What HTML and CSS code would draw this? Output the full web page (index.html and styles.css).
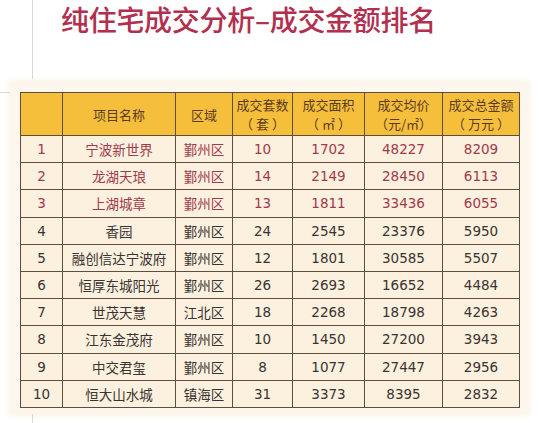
FILE: index.html
```html
<!DOCTYPE html>
<html lang="zh-CN">
<head>
    <meta charset="UTF-8">
    <meta name="viewport" content="width=device-width, initial-scale=1.0">
    <title>纯住宅成交分析-成交金额排名</title>
    <link rel="stylesheet" href="styles.css">
</head>
<body>
    <div class="slide">
        <h1 class="title">纯住宅成交分析–成交金额排名</h1>

        <div class="panel">
            <table class="rank">
                <colgroup>
                    <col style="width: 42px">
                    <col style="width: 113px">
                    <col style="width: 57px">
                    <col style="width: 60px">
                    <col style="width: 72px">
                    <col style="width: 78px">
                    <col style="width: 77px">
                </colgroup>
                <thead>
                    <tr>
                        <th></th>
                        <th>项目名称</th>
                        <th>区域</th>
                        <th>成交套数<br>（ 套 ）</th>
                        <th>成交面积<br>（ ㎡ ）</th>
                        <th>成交均价<br>（元/㎡）</th>
                        <th>成交总金额<br>（ 万元 ）</th>
                    </tr>
                </thead>
                <tbody>
                    <tr class="top"><td>1</td><td class="zh">宁波新世界</td><td class="zh">鄞州区</td><td>10</td><td>1702</td><td>48227</td><td>8209</td></tr>
                    <tr class="top"><td>2</td><td class="zh">龙湖天琅</td><td class="zh">鄞州区</td><td>14</td><td>2149</td><td>28450</td><td>6113</td></tr>
                    <tr class="top"><td>3</td><td class="zh">上湖城章</td><td class="zh">鄞州区</td><td>13</td><td>1811</td><td>33436</td><td>6055</td></tr>
                    <tr><td>4</td><td class="zh">香园</td><td class="zh">鄞州区</td><td>24</td><td>2545</td><td>23376</td><td>5950</td></tr>
                    <tr><td>5</td><td class="zh">融创信达宁波府</td><td class="zh">鄞州区</td><td>12</td><td>1801</td><td>30585</td><td>5507</td></tr>
                    <tr><td>6</td><td class="zh">恒厚东城阳光</td><td class="zh">鄞州区</td><td>26</td><td>2693</td><td>16652</td><td>4484</td></tr>
                    <tr><td>7</td><td class="zh">世茂天慧</td><td class="zh">江北区</td><td>18</td><td>2268</td><td>18798</td><td>4263</td></tr>
                    <tr><td>8</td><td class="zh">江东金茂府</td><td class="zh">鄞州区</td><td>10</td><td>1450</td><td>27200</td><td>3943</td></tr>
                    <tr><td>9</td><td class="zh">中交君玺</td><td class="zh">鄞州区</td><td>8</td><td>1077</td><td>27447</td><td>2956</td></tr>
                    <tr><td>10</td><td class="zh">恒大山水城</td><td class="zh">镇海区</td><td>31</td><td>3373</td><td>8395</td><td>2832</td></tr>
                </tbody>
            </table>
        </div>
        <div class="foot"></div>
    </div>
</body>
</html>
```

FILE: styles.css
```css
:root {
    --vinho: #b2304f;
    --amarelo: #f5bf3c;
    --creme: #fcf0df;
    --fundo: #fdf6ec;
    --linha: #5f4d3d;
    --texto: #3a3330;
    --destaque: #a03a4c;
}

body {
    margin: 0;
    background: #ffffff;
    font-family: "DejaVu Sans", "Noto Sans CJK SC", sans-serif;
    color: var(--texto);
}

.slide {
    position: relative;
    width: 539px;
    height: 423px;
    overflow: hidden;
}

/* linhas cinzas decorativas do slide */
.slide::before {
    content: "";
    position: absolute;
    left: 32px;
    top: 0;
    width: 1px;
    height: 79px;
    background: #d8d8d8;
}

.slide::after {
    content: "";
    position: absolute;
    left: 0;
    top: 92px;
    width: 10px;
    height: 1px;
    background: #d8d8d8;
}

.foot {
    margin-left: 32px;
    width: 1px;
    height: 12px;
    background: #d8d8d8;
}

.title {
    margin: 0;
    padding-left: 61px;
    height: 82px;
    font-family: "Noto Sans CJK SC", sans-serif;
    font-size: 28px;
    font-weight: 500;
    line-height: 38px;
    color: var(--vinho);
    letter-spacing: -0.3px;
}

.panel {
    margin-left: 10px;
    width: 518px;
    padding: 10px 9px 6px 10px;
    box-sizing: border-box;
    background: var(--fundo);
    box-shadow: 0 0 6px 2px #fdf3e4;
}

.rank {
    width: 499px;
    border-collapse: collapse;
    table-layout: fixed;
    background: var(--creme);
}

.rank th,
.rank td {
    border: 1px solid var(--linha);
    padding: 0;
    text-align: center;
}

.rank th {
    height: 42px;
    background: var(--amarelo);
    font-family: "Noto Sans CJK SC", sans-serif;
    font-size: 13px;
    font-weight: 400;
    line-height: 19px;
    color: #5a3b22;
    white-space: pre;
}

.rank td {
    height: 26.2px;
    font-size: 13.5px;
    line-height: 20px;
}

.rank td.zh {
    font-family: "Noto Sans CJK SC", sans-serif;
    font-weight: 400;
}

.rank tr.top td {
    color: var(--destaque);
}
```
